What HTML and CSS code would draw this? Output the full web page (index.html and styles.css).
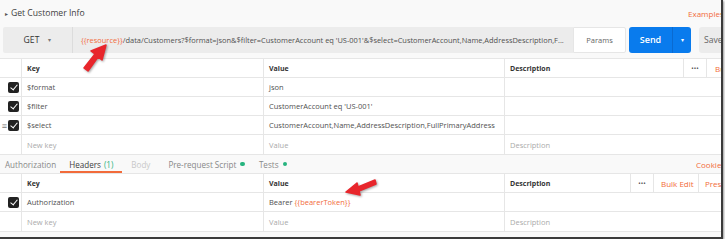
FILE: index.html
```html
<!DOCTYPE html>
<html>
<head>
<meta charset="utf-8">
<link rel="stylesheet" href="styles.css">
</head>
<body>
<div class="frame">
  <div class="inner">
    <div class="title-row">
      <div class="title"><span class="caret">&#9656;</span>Get Customer Info</div>
      <div class="orange-link examples">Examples</div>
    </div>
    <div class="url-row">
      <div class="method">GET <span class="method-caret">&#9662;</span></div>
      <div class="url"><span class="var">{{resource}}</span>/data/Customers?$format=json&amp;$filter=CustomerAccount eq 'US-001'&amp;$select=CustomerAccount,Name,AddressDescription,F...</div>
      <div class="params">Params</div>
      <div class="send"><span class="send-label">Send</span><span class="send-caret">&#9662;</span></div>
      <div class="save">Save</div>
    </div>

    <div class="grid">
      <div class="cell chk"></div>
      <div class="cell head">Key</div>
      <div class="cell head">Value</div>
      <div class="cell head desc-head"><span>Description</span><span class="actions"><span class="dots">&bull;&bull;&bull;</span><span class="orange-link bulk bulk-last">Bulk Edit</span></span></div>

      <div class="cell chk"><span class="box"></span></div>
      <div class="cell">$format</div>
      <div class="cell">json</div>
      <div class="cell"></div>

      <div class="cell chk"><span class="box"></span></div>
      <div class="cell">$filter</div>
      <div class="cell">CustomerAccount eq 'US-001'</div>
      <div class="cell"></div>

      <div class="cell chk"><span class="handle">&#8801;</span><span class="box"></span></div>
      <div class="cell">$select</div>
      <div class="cell">CustomerAccount,Name,AddressDescription,FullPrimaryAddress</div>
      <div class="cell"></div>

      <div class="cell chk"></div>
      <div class="cell ph">New key</div>
      <div class="cell ph">Value</div>
      <div class="cell ph">Description</div>
    </div>

    <div class="tabs">
      <div class="tab first">Authorization</div>
      <div class="tab active">Headers <span class="green">(1)</span></div>
      <div class="tab muted">Body</div>
      <div class="tab tight">Pre-request Script <span class="dot"></span></div>
      <div class="tab">Tests <span class="dot"></span></div>
      <div class="tab-spacer"></div>
      <div class="orange-link cookies">Cookies</div>
    </div>

    <div class="grid">
      <div class="cell chk"></div>
      <div class="cell head">Key</div>
      <div class="cell head">Value</div>
      <div class="cell head desc-head"><span>Description</span><span class="actions"><span class="dots">&bull;&bull;&bull;</span><span class="orange-link bulk">Bulk Edit</span><span class="orange-link presets">Presets</span></span></div>

      <div class="cell chk"><span class="box"></span></div>
      <div class="cell">Authorization</div>
      <div class="cell">Bearer&nbsp;<span class="var">{{bearerToken}}</span></div>
      <div class="cell"></div>

      <div class="cell chk"></div>
      <div class="cell ph">New key</div>
      <div class="cell ph">Value</div>
      <div class="cell ph">Description</div>
    </div>
  </div>

  <svg class="arrow arrow1" width="30" height="30" viewBox="0 0 30 30">
    <path d="M4 26 L15 12 L11 9 L26 3 L22 18 L18 15 L8 29 Z" fill="#e8262c" stroke="#e8262c" stroke-width="1.5" stroke-linejoin="round"/>
  </svg>
  <svg class="arrow arrow2" width="34" height="20" viewBox="0 0 34 20">
    <path d="M31 3 L14 10 L13 6 L2 15 L16 18 L15 14 L32 7 Z" fill="#e8262c" stroke="#e8262c" stroke-width="1.5" stroke-linejoin="round"/>
  </svg>
</div>
</body>
</html>
```

FILE: styles.css
```css
* { box-sizing: border-box; }
html, body { margin: 0; padding: 0; background: #ffffff; }
body {
  font-family: "Open Sans", "Noto Sans", sans-serif;
  font-size: 7.5px;
  color: #505050;
}
.frame {
  position: relative;
  width: 723px;
  height: 239px;
  background: #f9f9f9;
  border-right: 2px solid #3b3b3b;
  border-bottom: 2px solid #3b3b3b;
  box-shadow: 1px 1px 2px rgba(0,0,0,0.4);
  overflow: hidden;
}
.inner { width: 751px; }
.title-row {
  display: flex;
  align-items: center;
  height: 26px;
  padding: 0 0 0 5px;
}
.title { font-size: 8.6px; color: #404040; flex: 1; }
.caret { font-size: 6px; margin-right: 3px; color: #555; }
.orange-link { color: #f26b3a; }
.examples { font-size: 8px; width: 63px; }

.url-row {
  display: flex;
  height: 26px;
  padding-left: 3px;
  margin-top: 1px;
}
.url-row > div { flex-shrink: 0; }
.method {
  width: 70px;
  background: #ececec;
  border-radius: 2px 0 0 2px;
  display: flex;
  align-items: center;
  justify-content: center;
  gap: 9px;
  font-size: 8.6px;
  color: #333;
  border-right: 1px solid #dcdcdc;
}
.method-caret { font-size: 6px; color: #777; }
.url {
  width: 500px;
  background: #ececec;
  display: flex;
  align-items: center;
  padding-left: 8px;
  white-space: nowrap;
  overflow: hidden;
  font-size: 7.45px;
  color: #505050;
}
.var { color: #f26b3a; white-space: pre; }
.params {
  width: 53px;
  background: #fff;
  border: 1px solid #e6e6e6;
  border-radius: 0 2px 2px 0;
  display: flex;
  align-items: center;
  justify-content: center;
  color: #666;
}
.send {
  margin-left: 3px;
  width: 62px;
  background: #097bed;
  border-radius: 3px;
  display: flex;
  align-items: center;
  color: #fff;
}
.send-label {
  flex: 1;
  text-align: center;
  font-size: 9px;
  font-weight: 600;
  border-right: 1px solid #0a6ad0;
  height: 100%;
  line-height: 26px;
}
.send-caret { width: 18px; text-align: center; font-size: 6px; }
.save {
  margin-left: 8px;
  width: 40px;
  background: #ececec;
  border-radius: 3px;
  display: flex;
  align-items: center;
  padding-left: 5px;
  font-size: 8.6px;
  color: #666;
}

.grid {
  display: grid;
  grid-template-columns: 21px 242px 241px 1fr;
  grid-auto-rows: 19px;
  background: #fff;
  border-top: 1px solid #e6e6e6;
  border-bottom: 1px solid #e6e6e6;
}
.url-row + .grid { margin-top: 5px; }
.cell {
  display: flex;
  align-items: center;
  padding-left: 5px;
  border-left: 1px solid #e6e6e6;
  border-bottom: 1px solid #e6e6e6;
  white-space: nowrap;
  overflow: hidden;
}
.cell:nth-child(4n+1) { border-left: none; }
.cell:nth-last-child(-n+4) { border-bottom: none; }
.chk { padding-left: 0; justify-content: flex-end; padding-right: 2px; }
.box {
  width: 11px;
  height: 11px;
  border-radius: 2px;
  background: #222;
  position: relative;
}
.box::after {
  content: "";
  position: absolute;
  left: 3.5px;
  top: 1.5px;
  width: 3px;
  height: 6px;
  border-right: 1.6px solid #fff;
  border-bottom: 1.6px solid #fff;
  transform: rotate(40deg);
}
.handle { font-size: 9px; color: #777; margin-right: 1px; }
.head { font-size: 7px; font-weight: 700; color: #333; }
.desc-head { justify-content: space-between; padding-right: 0; }
.actions { display: flex; align-items: center; height: 100%; font-weight: 400; font-size: 8px; }
.actions > span {
  height: 100%;
  display: flex;
  align-items: center;
  border-left: 1px solid #e6e6e6;
  flex-shrink: 0;
}
.actions > .dots { width: 23px; justify-content: center; color: #555; font-size: 6.5px; }
.actions > .bulk { width: 45px; padding-left: 7px; }
.actions > .bulk-last { padding-left: 8px; }
.actions > .presets { width: 53px; padding-left: 6px; }
.ph { color: #aaa; }

.tabs {
  display: flex;
  align-items: stretch;
  height: 18px;
  font-size: 8.1px;
}
.tab {
  display: flex;
  align-items: center;
  color: #888;
  position: relative;
  padding: 0 9px;
}
.tab.first { padding-left: 5px; padding-right: 4px; }
.tab.tight { padding-right: 5px; }
.tab.active { color: #404040; }
.tab.active::after {
  content: "";
  position: absolute;
  left: 0; right: 0; bottom: 0;
  height: 2px;
  background: #f26b3a;
}
.tab.muted { color: #c8c8c8; }
.green { color: #26b47f; margin-left: 3px; }
.dot {
  width: 4.5px; height: 4.5px; border-radius: 50%;
  background: #26b47f; margin-left: 4px;
}
.tab-spacer { flex: 1; }
.cookies { display: flex; align-items: center; width: 55px; font-size: 8px; }

.arrow { position: absolute; }
.arrow1 { left: 80px; top: 42px; filter: drop-shadow(1px 1px 1px rgba(0,0,0,0.35)); }
.arrow2 { left: 344px; top: 177px; filter: drop-shadow(1px 1px 1px rgba(0,0,0,0.35)); }
```
